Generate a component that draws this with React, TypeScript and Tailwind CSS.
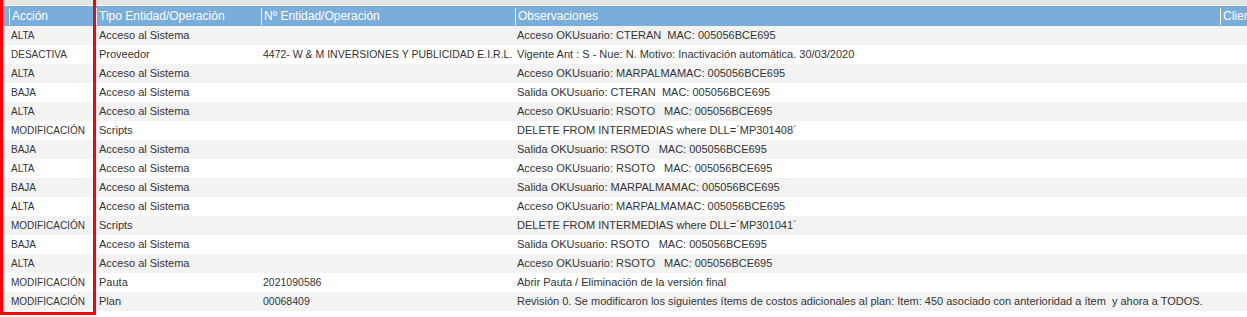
const rows: [string, string, string, string][] = [
  ["ALTA", "Acceso al Sistema", "", "Acceso OKUsuario: CTERAN\u00a0\u00a0MAC: 005056BCE695"],
  ["DESACTIVA", "Proveedor", "4472- W & M INVERSIONES Y PUBLICIDAD E.I.R.L.", "Vigente Ant : S - Nue: N. Motivo: Inactivación automática. 30/03/2020"],
  ["ALTA", "Acceso al Sistema", "", "Acceso OKUsuario: MARPALMAMAC: 005056BCE695"],
  ["BAJA", "Acceso al Sistema", "", "Salida OKUsuario: CTERAN\u00a0\u00a0MAC: 005056BCE695"],
  ["ALTA", "Acceso al Sistema", "", "Acceso OKUsuario: RSOTO\u00a0\u00a0\u00a0MAC: 005056BCE695"],
  ["MODIFICACIÓN", "Scripts", "", "DELETE FROM INTERMEDIAS where DLL=´MP301408´"],
  ["BAJA", "Acceso al Sistema", "", "Salida OKUsuario: RSOTO\u00a0\u00a0\u00a0MAC: 005056BCE695"],
  ["ALTA", "Acceso al Sistema", "", "Acceso OKUsuario: RSOTO\u00a0\u00a0\u00a0MAC: 005056BCE695"],
  ["BAJA", "Acceso al Sistema", "", "Salida OKUsuario: MARPALMAMAC: 005056BCE695"],
  ["ALTA", "Acceso al Sistema", "", "Acceso OKUsuario: MARPALMAMAC: 005056BCE695"],
  ["MODIFICACIÓN", "Scripts", "", "DELETE FROM INTERMEDIAS where DLL=´MP301041´"],
  ["BAJA", "Acceso al Sistema", "", "Salida OKUsuario: RSOTO\u00a0\u00a0\u00a0MAC: 005056BCE695"],
  ["ALTA", "Acceso al Sistema", "", "Acceso OKUsuario: RSOTO\u00a0\u00a0\u00a0MAC: 005056BCE695"],
  ["MODIFICACIÓN", "Pauta", "2021090586", "Abrir Pauta / Eliminación de la versión final"],
  ["MODIFICACIÓN", "Plan", "00068409", "Revisión 0. Se modificaron los siguientes ítems de costos adicionales al plan: Item: 450 asociado con anterioridad a ítem\u00a0 y ahora a TODOS."],
]

function HeadCell({ label, className }: { label: string; className: string }) {
  return (
    <div className={`flex h-full items-center ${className}`}>
      <div className="flex h-[17px] items-center border-l border-white pl-[2px]">{label}</div>
    </div>
  )
}

export default function App() {
  return (
    <div
      className="relative h-[317px] w-[1247px] overflow-hidden bg-white text-[#333]"
      style={{ fontFamily: '"Liberation Sans", Arial, sans-serif' }}
    >
      <div className="h-[5px] bg-[#e6e6e6]" />
      <div className="h-[1px] bg-white" />
      <div className="flex h-[20px] w-[1450px] bg-[#79addb] text-[12px] text-white">
        <HeadCell label="Acción" className="w-[96px] pl-[9px]" />
        <HeadCell label="Tipo Entidad/Operación" className="w-[165px]" />
        <HeadCell label="Nº Entidad/Operación" className="w-[254px]" />
        <HeadCell label="Observaciones" className="w-[705px]" />
        <HeadCell label="Cliente" className="w-[230px] overflow-hidden" />
      </div>
      <div className="w-[1450px] text-[11px]">
        {rows.map((r, i) => (
          <div
            key={i}
            className={`flex h-[19px] items-center whitespace-nowrap ${i % 2 === 0 ? "bg-[#f3f3f3]" : "bg-white"}`}
          >
            <div className="w-[96px] pl-[11px] text-[10px]">{r[0]}</div>
            <div className="w-[165px] pl-[3px]">{r[1]}</div>
            <div className="w-[254px] pl-[2px] text-[10.5px]">{r[2]}</div>
            <div className="w-[705px] pl-[2px]">{r[3]}</div>
            <div className="w-[230px]" />
          </div>
        ))}
        <div className="h-[19px] bg-white" />
      </div>
      <div className="absolute left-0 top-[-5px] h-[320px] w-[96px] border-[3px] border-[#ff0000]" />
    </div>
  )
}
